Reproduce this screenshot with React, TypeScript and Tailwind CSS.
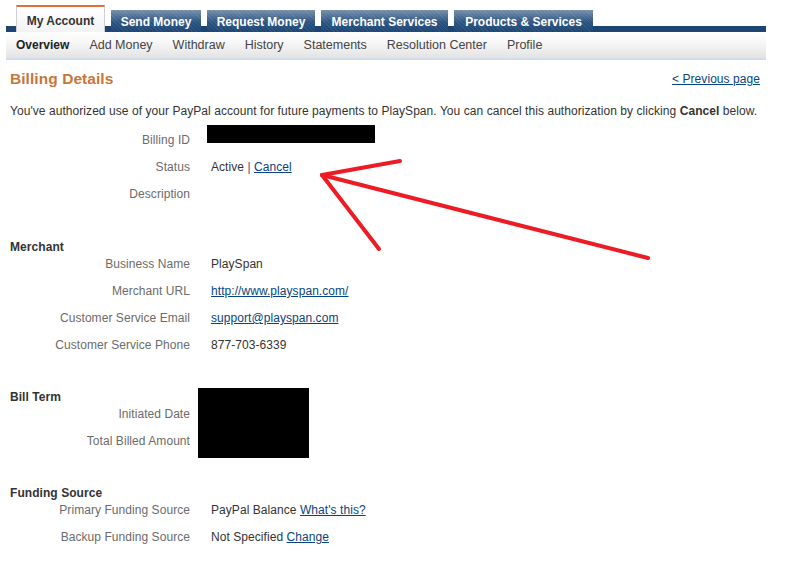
import React from "react";

const tabs = [
  { label: "Send Money", w: "w-[90px]" },
  { label: "Request Money", w: "w-[108px]" },
  { label: "Merchant Services", w: "w-[127px]" },
  { label: "Products & Services", w: "w-[139px]" },
];

const subnav = ["Overview", "Add Money", "Withdraw", "History", "Statements", "Resolution Center", "Profile"];

const Row = ({ label, children }: { label: string; children?: React.ReactNode }) => (
  <div className="flex h-[27px] items-start leading-[17px]">
    <div className="w-[180px] text-right text-[#6b6b6b]">{label}</div>
    <div className="ml-[21px] text-[#333]">{children}</div>
  </div>
);

const Heading = ({ children }: { children: React.ReactNode }) => (
  <div className="h-[17px] leading-[17px] font-bold text-[#333]">{children}</div>
);

const A = ({ children }: { children: React.ReactNode }) => (
  <a href="#" className="text-[#084482] underline">
    {children}
  </a>
);

export default function App() {
  return (
    <div className="relative w-[810px] h-[565px] overflow-hidden bg-white font-['Liberation_Sans',Arial,sans-serif] text-[12px] tracking-[0.06px]">
      {/* top navigation */}
      <div className="ml-[6px] w-[760px] tracking-normal">
        <div className="flex h-[32px] items-end gap-[6px] pl-[10px] bg-[linear-gradient(to_bottom,transparent_26px,#1c4573_26px)]">
          <div className="flex h-[27px] w-[89px] items-center justify-center pt-[2px] border-t-2 border-x border-t-[#e2703c] border-x-[#cfcfcf] bg-[linear-gradient(#ffffff,#f3f3f3)] font-bold text-[#333]">
            My Account
          </div>
          {tabs.map((t) => (
            <div
              key={t.label}
              className={`flex h-[22px] ${t.w} items-center justify-center pt-[1px] font-bold text-white bg-[repeating-linear-gradient(45deg,rgba(255,255,255,0.07)_0px,rgba(255,255,255,0.07)_1px,transparent_1px,transparent_3px),linear-gradient(#7890ab,#2a5482_55%,#1c4573)]`}
            >
              {t.label}
            </div>
          ))}
        </div>
        <div className="flex h-[28px] items-center gap-[20px] pl-[10px] border-b-2 border-[#d2ddeb] bg-[linear-gradient(#ffffff,#f7f7f7_40%,#e3e3e3)] text-[12.5px] text-[#444]">
          {subnav.map((s, i) => (
            <span key={s} className={i === 0 ? "font-bold text-[#222] text-[12px]" : ""}>
              {s}
            </span>
          ))}
        </div>
      </div>

      {/* content */}
      <div className="px-[10px]">
        <div className="mt-[9px] flex h-[20px] w-[750px] items-center justify-between">
          <h1 className="text-[15.5px] font-bold text-[#c8763a]">Billing Details</h1>
          <A>&lt; Previous page</A>
        </div>

        <p className="mt-[14px] whitespace-nowrap leading-[17px] text-[#333]">
          You've authorized use of your PayPal account for future payments to PlaySpan. You can cancel this
          authorization by clicking <b>Cancel</b> below.
        </p>

        <div className="mt-[12px]">
          <Row label="Billing ID" />
          <Row label="Status">
            Active <span className="text-[#5a3d7a]">|</span> <A>Cancel</A>
          </Row>
          <Row label="Description" />
        </div>

        <div className="mt-[26px]">
          <Heading>Merchant</Heading>
          <Row label="Business Name">PlaySpan</Row>
          <Row label="Merchant URL">
            <A>http://www.playspan.com/</A>
          </Row>
          <Row label="Customer Service Email">
            <A>support@playspan.com</A>
          </Row>
          <Row label="Customer Service Phone">877-703-6339</Row>
        </div>

        <div className="mt-[25px]">
          <Heading>Bill Term</Heading>
          <Row label="Initiated Date" />
          <Row label="Total Billed Amount" />
        </div>

        <div className="mt-[25px]">
          <Heading>Funding Source</Heading>
          <Row label="Primary Funding Source">
            PayPal Balance <A>What's this?</A>
          </Row>
          <Row label="Backup Funding Source">
            Not Specified <A>Change</A>
          </Row>
        </div>
      </div>

      {/* redaction boxes */}
      <div className="absolute left-[207px] top-[125px] h-[18px] w-[168px] bg-black" />
      <div className="absolute left-[198px] top-[388px] h-[70px] w-[111px] bg-black" />

      {/* hand-drawn arrow */}
      <svg className="pointer-events-none absolute inset-0" width="810" height="565">
        <g stroke="#ed1c24" strokeWidth="4" strokeLinecap="round" fill="none">
          <line x1="322" y1="175" x2="400" y2="161" />
          <line x1="322" y1="175" x2="379" y2="249" />
          <line x1="322" y1="175" x2="648" y2="258" />
        </g>
      </svg>
    </div>
  );
}
